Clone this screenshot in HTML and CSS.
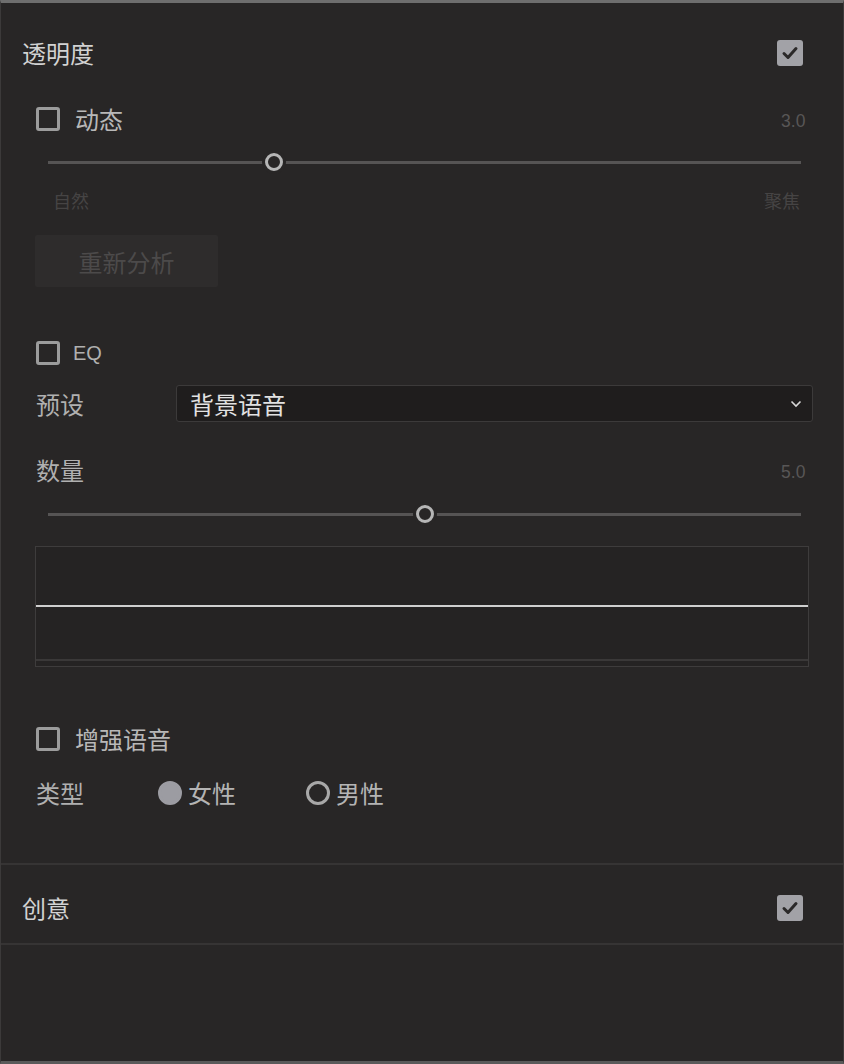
FILE: index.html
```html
<!DOCTYPE html>
<html lang="zh">
<head>
<meta charset="utf-8">
<link rel="stylesheet" href="styles.css">
</head>
<body>
<div class="panel">
  <div class="section-head first">
    <span class="head-title">透明度</span>
    <span class="chk-on"><svg viewBox="0 0 26 26" width="26" height="26"><path d="M7 13.5 L11 17.5 L19 8.5" fill="none" stroke="#2b2929" stroke-width="3" stroke-linecap="round" stroke-linejoin="round"/></svg></span>
  </div>

  <div class="row check-row dyn-row">
    <span class="chk"></span><span class="label">动态</span>
    <span class="value">3.0</span>
  </div>
  <div class="slider s1"><div class="track"></div><div class="knob" style="left: 30%"></div></div>
  <div class="ends"><span>自然</span><span>聚焦</span></div>
  <div class="btn">重新分析</div>

  <div class="row check-row eq-row">
    <span class="chk"></span><span class="label eq">EQ</span>
  </div>
  <div class="row preset-row">
    <span class="field-label">预设</span>
    <div class="select"><span>背景语音</span><svg class="chev" viewBox="0 0 12 8" width="12" height="8"><path d="M1.5 1.5 L6 6 L10.5 1.5" fill="none" stroke="#d8d8d8" stroke-width="1.6"/></svg></div>
  </div>
  <div class="row amount-row">
    <span class="field-label">数量</span>
    <span class="value">5.0</span>
  </div>
  <div class="slider s2"><div class="track"></div><div class="knob" style="left: 50.1%"></div></div>
  <div class="graph"><div class="graph-top"></div><div class="graph-line"></div><div class="graph-bottom"></div></div>

  <div class="row check-row enh-row">
    <span class="chk"></span><span class="label">增强语音</span>
  </div>
  <div class="row type-row">
    <span class="field-label">类型</span>
    <span class="radio-opt female"><span class="radio on"></span>女性</span>
    <span class="radio-opt male"><span class="radio"></span>男性</span>
  </div>

  <div class="divider d1"></div>
  <div class="section-head second">
    <span class="head-title">创意</span>
    <span class="chk-on"><svg viewBox="0 0 26 26" width="26" height="26"><path d="M7 13.5 L11 17.5 L19 8.5" fill="none" stroke="#2b2929" stroke-width="3" stroke-linecap="round" stroke-linejoin="round"/></svg></span>
  </div>
  <div class="divider d2"></div>
</div>
</body>
</html>
```

FILE: styles.css
```css
html, body {
  margin: 0;
  padding: 0;
  background: #282626;
}
body {
  font-family: "Noto Sans CJK SC", "Noto Sans", sans-serif;
  color: #b4b4b4;
}
.panel {
  box-sizing: border-box;
  width: 844px;
  height: 1064px;
  background: #282626;
  border-top: 3px solid #6e6e6e;
  border-left: 1px solid #3c3a3a;
  border-right: 1px solid #3c3a3a;
  border-bottom: 3px solid #5a5a5a;
  overflow: hidden;
}
.section-head {
  display: flex;
  align-items: center;
  justify-content: space-between;
  padding: 0 40px 0 21px;
}
.section-head.first { height: 100px; }
.section-head.second { height: 78px; padding-top: 8px; box-sizing: border-box; }
.head-title {
  font-size: 24px;
  line-height: 1;
  color: #d2d2d2;
}
.chk-on {
  width: 26px;
  height: 26px;
  border-radius: 3px;
  background: #a2a2a7;
  display: block;
}
.chk-on svg { display: block; }
.row {
  display: flex;
  align-items: center;
  padding: 0 38px 0 35px;
}
.check-row { height: 32px; }
.chk {
  box-sizing: border-box;
  width: 24px;
  height: 24px;
  border: 3px solid #9c9c9c;
  border-radius: 3px;
  margin-right: 15px;
}
.label {
  font-size: 24px;
  line-height: 1;
  color: #b8b8b8;
}
.label.eq {
  font-family: "Liberation Sans", sans-serif;
  font-size: 20px;
  margin-left: -2px;
  color: #b0b0b0;
}
.value {
  margin-left: auto;
  font-family: "Liberation Sans", sans-serif;
  font-size: 19px;
  line-height: 1;
  color: #585656;
  transform: scaleX(0.92);
  transform-origin: right center;
  padding-top: 3px;
}
.slider {
  position: relative;
  height: 54px;
  margin: 0 42px 0 47px;
}
.slider.s2 { height: 28px; margin-top: 14px; }
.track {
  position: absolute;
  left: 0;
  right: 0;
  top: 50%;
  height: 3px;
  margin-top: -1px;
  background: #565454;
}
.knob {
  position: absolute;
  top: 50%;
  width: 18px;
  height: 18px;
  box-sizing: border-box;
  margin: -9px 0 0 -9px;
  border: 3px solid #b6b6b6;
  border-radius: 50%;
  background: #282626;
  box-shadow: 0 0 0 3px #282626;
}
.ends {
  display: flex;
  justify-content: space-between;
  height: 22px;
  align-items: center;
  padding: 0 43px 0 52px;
  font-size: 18px;
  line-height: 1;
  color: #464444;
}
.btn {
  width: 183px;
  height: 52px;
  margin: 24px 0 0 34px;
  background: #2e2c2c;
  border-radius: 2px;
  display: flex;
  align-items: center;
  justify-content: center;
  font-size: 24px;
  color: #4c4a4a;
}
.eq-row { margin-top: 50px; }
.preset-row { margin-top: 16px; height: 37px; padding-right: 30px; }
.field-label {
  font-size: 24px;
  line-height: 1;
  color: #b0b0b0;
  width: 140px;
  flex: none;
}
.select {
  flex: 1;
  height: 37px;
  box-sizing: border-box;
  border: 1px solid #3c3a3a;
  border-radius: 3px;
  background: #1f1d1d;
  display: flex;
  align-items: center;
  padding: 0 10px 0 13px;
  font-size: 24px;
  color: #e2e2e2;
}
.select span { line-height: 1; }
.chev { margin-left: auto; }
.amount-row { margin-top: 32px; height: 32px; }
.graph {
  margin: 18px 34px 0 34px;
  height: 121px;
  box-sizing: border-box;
  border: 1px solid #3e3c3c;
  background: #252323;
  display: flex;
  flex-direction: column;
}
.graph-top { height: 58px; }
.graph-line { height: 2px; background: #cfcfcf; }
.graph-bottom { height: 52px; border-bottom: 2px solid #3a3838; }
.enh-row { margin-top: 56px; }
.type-row { margin-top: 22px; height: 32px; }
.field-label + .radio-opt { margin-left: -18px; }
.radio-opt {
  display: flex;
  align-items: center;
  font-size: 24px;
  line-height: 1;
  color: #b4b4b4;
}
.radio-opt.male { margin-left: 70px; }
.radio {
  box-sizing: border-box;
  width: 24px;
  height: 24px;
  border-radius: 50%;
  border: 3px solid #a8a8a8;
  margin-right: 6px;
}
.radio.on {
  background: #9c9ca2;
  border-color: #9c9ca2;
}
.divider {
  height: 2px;
  background: #363434;
}
.divider.d1 { margin-top: 54px; }
```
